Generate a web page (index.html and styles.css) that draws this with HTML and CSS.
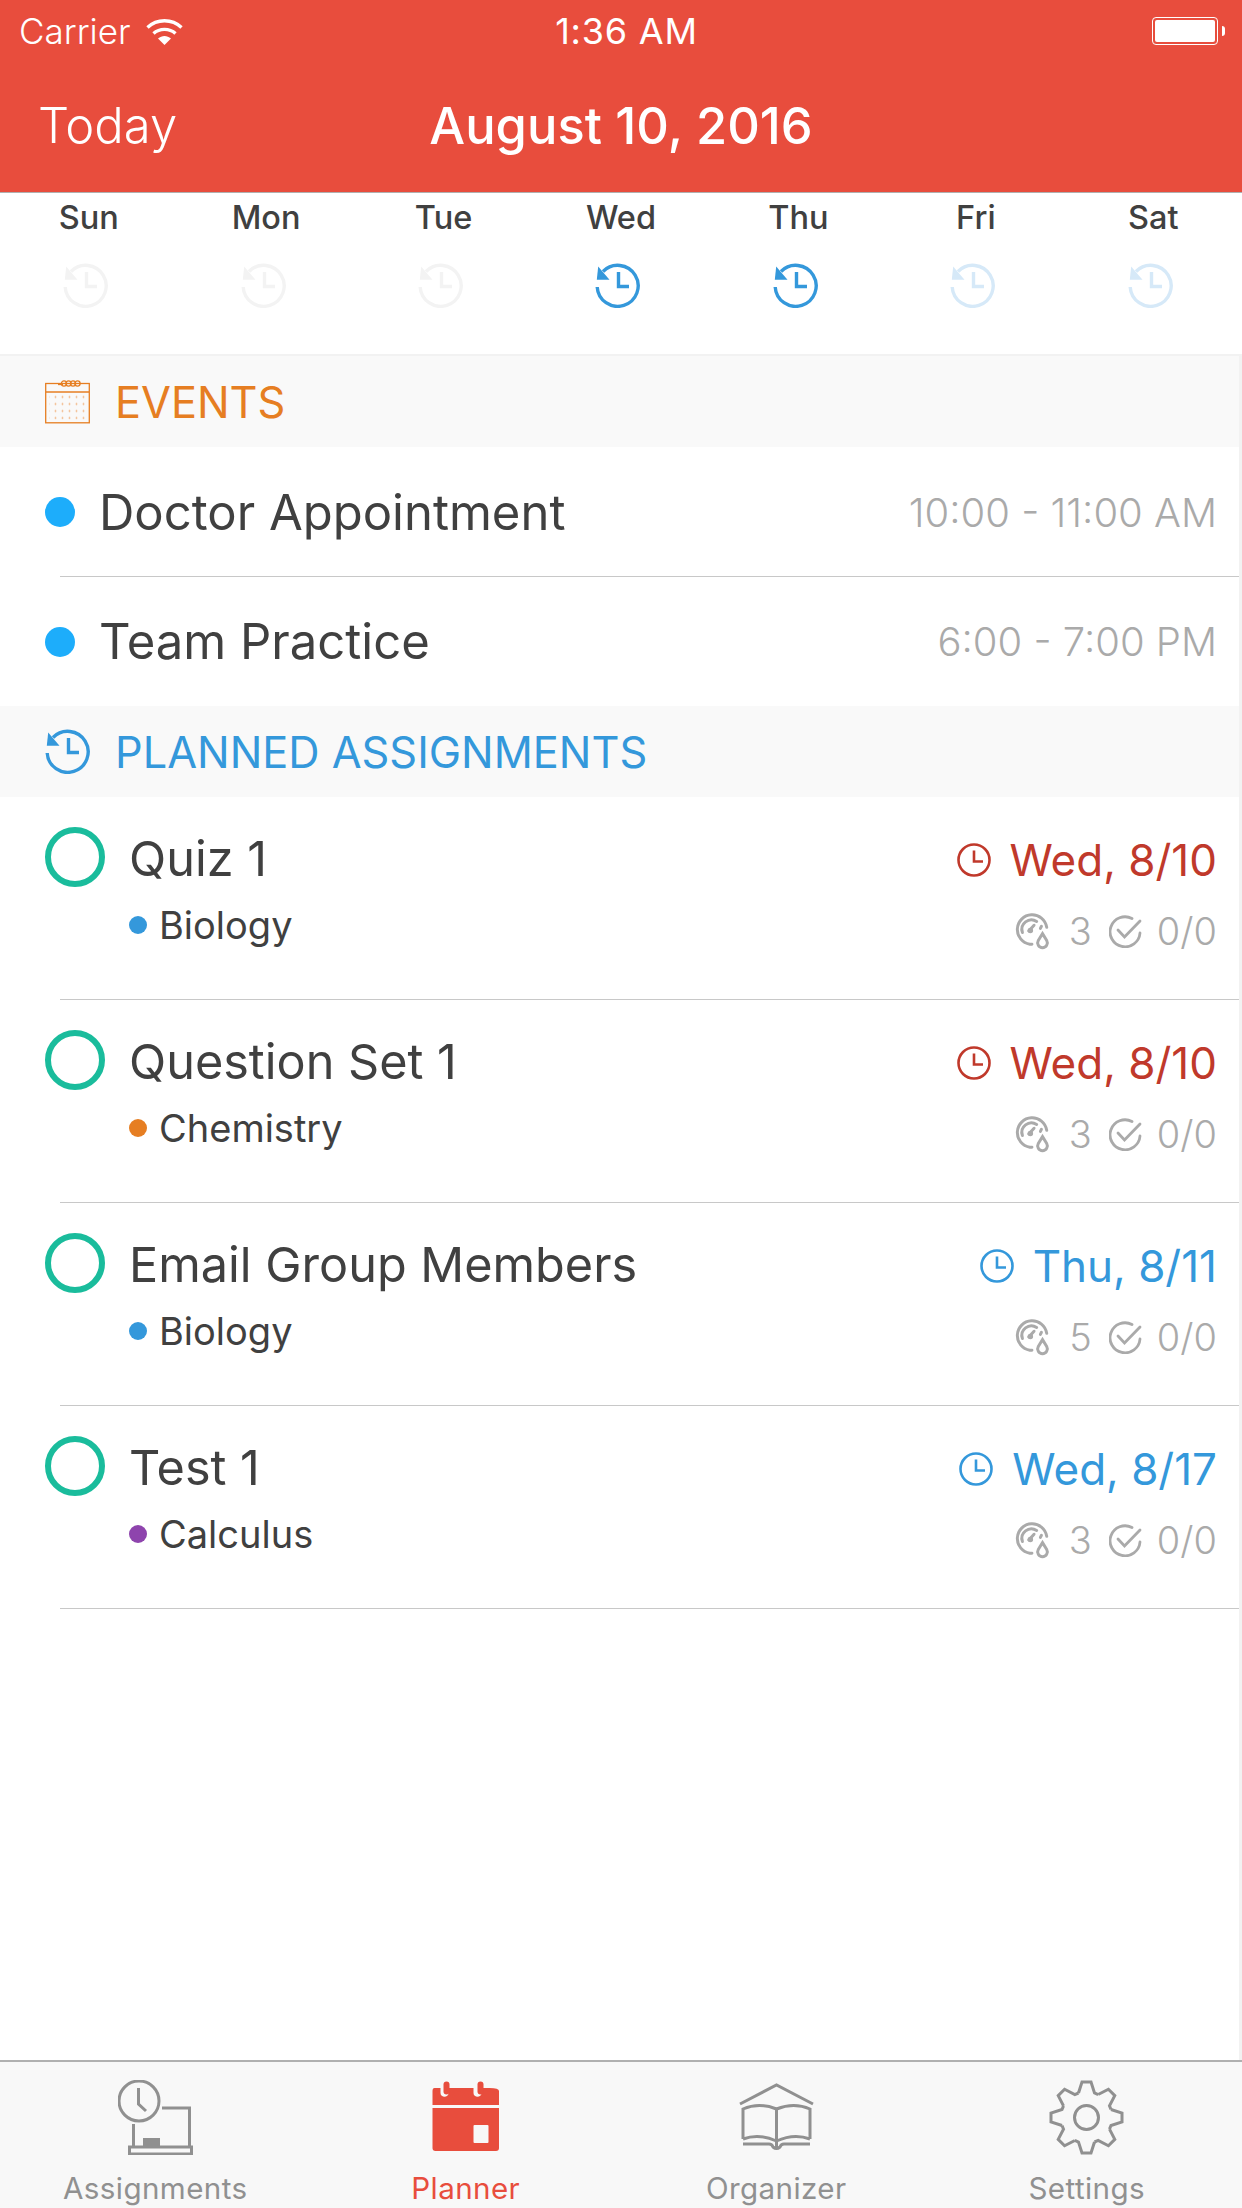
FILE: index.html
```html
<!DOCTYPE html>
<html lang="en">
<head>
    <meta charset="UTF-8">
    <title>Planner</title>
    <link rel="stylesheet" href="styles.css">
</head>
<body>
    <svg class="defs" width="0" height="0">
        <symbol id="history" viewBox="0 0 45 45">
            <path d="M2.2 24A20.5 20.5 0 1 0 8 8.5" fill="none" stroke="currentColor" stroke-width="3.4"/>
            <path d="M3.2 3.5 1.8 16.8H14.5L10 11.5Z" fill="currentColor"/>
            <path d="M23.5 9V23.5H34" fill="none" stroke="currentColor" stroke-width="3.4"/>
        </symbol>
        <symbol id="clock" viewBox="0 0 34 34">
            <circle cx="17" cy="17" r="15.5" fill="none" stroke="currentColor" stroke-width="2.6"/>
            <path d="M17 7.5V18.5H26" fill="none" stroke="currentColor" stroke-width="2.6"/>
        </symbol>
        <symbol id="gauge" viewBox="0 0 36 36">
            <g fill="none" stroke="#aaa" stroke-width="2.8" stroke-linecap="round">
                <path d="M17 30.5H15A14 14 0 1 1 31 14.5"/>
                <path d="M8 19.5A9 9 0 0 1 21.5 9"/>
                <path d="M26 13.5 25 15.5"/>
                <path d="M14 18 19 12.5"/>
                <path d="M27 20.5 31 27A4.6 4.6 0 1 1 23 27Z"/>
            </g>
            <circle cx="15.5" cy="17.5" r="2.6" fill="#aaa"/>
        </symbol>
        <symbol id="check" viewBox="0 0 33 33">
            <g fill="none" stroke="#aaa" stroke-width="2.8" stroke-linecap="round">
                <path d="M31 18A15 15 0 1 1 23 3.5"/>
                <path d="M9 15 15.5 22 31 6"/>
            </g>
        </symbol>
        <pattern id="dots" width="7" height="7" patternUnits="userSpaceOnUse">
            <circle cx="3.5" cy="3.5" r="0.9" fill="#f0b078"/>
        </pattern>
        <symbol id="calendar" viewBox="0 0 45 44">
            <rect x="0.7" y="4" width="43.6" height="39.3" fill="none" stroke="#e67e22" stroke-width="1.3"/>
            <path d="M1 12.5H44" stroke="#e67e22" stroke-width="1.3"/>
            <rect x="4" y="15" width="38" height="25" fill="url(#dots)"/>
            <g fill="none" stroke="#e67e22" stroke-width="1.3">
                <path d="M13 5H18"/>
                <circle cx="19" cy="4" r="2.6"/>
                <circle cx="23.5" cy="4" r="2.6"/>
                <circle cx="28" cy="4" r="2.6"/>
                <circle cx="32.5" cy="4" r="2.6"/>
            </g>
        </symbol>
    </svg>

    <header class="topbar">
        <div class="statusbar">
            <span class="carrier">Carrier</span>
            <svg class="wifi" viewBox="0 0 37 27">
                <path d="M1.5 9.5C11 .5 26 .5 35.5 9.5" fill="none" stroke="#fff" stroke-width="3.4"/>
                <path d="M7.5 15.5C13.5 10 23.5 10 29.5 15.5" fill="none" stroke="#fff" stroke-width="3.4"/>
                <path d="M12 20.5C16 17 21 17 25 20.5L18.5 27Z" fill="#fff"/>
            </svg>
            <span class="time">1:36 AM</span>
            <span class="battery"><span class="battery-fill"></span></span>
        </div>
        <div class="navbar">
            <span class="today">Today</span>
            <span class="date">August 10, 2016</span>
        </div>
    </header>

    <section class="week">
        <div class="day"><span>Sun</span><svg class="day-icon past"><use href="#history"/></svg></div>
        <div class="day"><span>Mon</span><svg class="day-icon past"><use href="#history"/></svg></div>
        <div class="day"><span>Tue</span><svg class="day-icon past"><use href="#history"/></svg></div>
        <div class="day"><span>Wed</span><svg class="day-icon active"><use href="#history"/></svg></div>
        <div class="day"><span>Thu</span><svg class="day-icon active"><use href="#history"/></svg></div>
        <div class="day"><span>Fri</span><svg class="day-icon future"><use href="#history"/></svg></div>
        <div class="day"><span>Sat</span><svg class="day-icon future"><use href="#history"/></svg></div>
    </section>

    <main class="content">
        <div class="section-head events-head">
            <svg class="section-icon"><use href="#calendar"/></svg>
            <span>EVENTS</span>
        </div>
        <div class="event">
            <span class="event-dot"></span>
            <span class="event-name">Doctor Appointment</span>
            <span class="event-time">10:00 - 11:00 AM</span>
        </div>
        <div class="event event-last">
            <span class="event-dot"></span>
            <span class="event-name">Team Practice</span>
            <span class="event-time">6:00 - 7:00 PM</span>
        </div>

        <div class="section-head planned-head">
            <svg class="section-icon"><use href="#history"/></svg>
            <span>PLANNED ASSIGNMENTS</span>
        </div>

        <div class="task">
            <span class="task-check"></span>
            <div class="task-main">
                <div class="task-title">Quiz 1</div>
                <div class="task-class"><span class="class-dot biology"></span>Biology</div>
            </div>
            <div class="task-side">
                <div class="task-due overdue"><svg class="due-icon"><use href="#clock"/></svg>Wed, 8/10</div>
                <div class="task-meta"><svg class="gauge-icon"><use href="#gauge"/></svg><span>3</span><svg class="check-icon"><use href="#check"/></svg><span>0/0</span></div>
            </div>
        </div>
        <div class="task">
            <span class="task-check"></span>
            <div class="task-main">
                <div class="task-title">Question Set 1</div>
                <div class="task-class"><span class="class-dot chemistry"></span>Chemistry</div>
            </div>
            <div class="task-side">
                <div class="task-due overdue"><svg class="due-icon"><use href="#clock"/></svg>Wed, 8/10</div>
                <div class="task-meta"><svg class="gauge-icon"><use href="#gauge"/></svg><span>3</span><svg class="check-icon"><use href="#check"/></svg><span>0/0</span></div>
            </div>
        </div>
        <div class="task">
            <span class="task-check"></span>
            <div class="task-main">
                <div class="task-title">Email Group Members</div>
                <div class="task-class"><span class="class-dot biology"></span>Biology</div>
            </div>
            <div class="task-side">
                <div class="task-due upcoming"><svg class="due-icon"><use href="#clock"/></svg>Thu, 8/11</div>
                <div class="task-meta"><svg class="gauge-icon"><use href="#gauge"/></svg><span>5</span><svg class="check-icon"><use href="#check"/></svg><span>0/0</span></div>
            </div>
        </div>
        <div class="task">
            <span class="task-check"></span>
            <div class="task-main">
                <div class="task-title">Test 1</div>
                <div class="task-class"><span class="class-dot calculus"></span>Calculus</div>
            </div>
            <div class="task-side">
                <div class="task-due upcoming"><svg class="due-icon"><use href="#clock"/></svg>Wed, 8/17</div>
                <div class="task-meta"><svg class="gauge-icon"><use href="#gauge"/></svg><span>3</span><svg class="check-icon"><use href="#check"/></svg><span>0/0</span></div>
            </div>
        </div>
    </main>

    <nav class="tabbar">
        <div class="tab">
            <svg class="tab-icon" viewBox="0 0 75 75">
                <g fill="none" stroke="#909090" stroke-width="3">
                    <circle cx="21" cy="21" r="20"/>
                    <path d="M20.5 8V24L28 31"/>
                    <path d="M44 28H71.5V66"/>
                    <path d="M15.5 44V66"/>
                    <rect x="11.5" y="67" width="62" height="7"/>
                </g>
                <rect x="25" y="58" width="17" height="9" fill="#909090"/>
            </svg>
            <span>Assignments</span>
        </div>
        <div class="tab tab-active">
            <svg class="tab-icon" viewBox="0 0 75 75">
                <path d="M9 8H17V13C17 18 25 18 25 13V8H50V13C50 18 58 18 58 13V8H66Q75.5 8 75.5 11V25H9V11Q9 8 11 8Z" fill="#e84d3d" transform="translate(-4.5 0)"/>
                <path d="M4.5 28H71V68Q71 71 68 71H7.5Q4.5 71 4.5 68Z" fill="#e84d3d"/>
                <rect x="15.5" y="1.5" width="6" height="13" rx="3" fill="#e84d3d"/>
                <rect x="49.5" y="1.5" width="6" height="13" rx="3" fill="#e84d3d"/>
                <rect x="45.5" y="45" width="15" height="18" rx="1" fill="#f8f8f8"/>
            </svg>
            <span>Planner</span>
        </div>
        <div class="tab">
            <svg class="tab-icon" viewBox="0 0 75 75">
                <g fill="none" stroke="#909090" stroke-width="3">
                    <path d="M1 24 37.5 5 74 24"/>
                    <path d="M4 59V29Q20 22 37.5 29Q55 22 71 29V59"/>
                    <path d="M37.5 29V68"/>
                    <path d="M4 59Q20 53 37.5 61Q55 53 71 59"/>
                    <path d="M4 64H30Q33 64 34 67Q37.5 70 41 67Q42 64 45 64H71"/>
                </g>
            </svg>
            <span>Organizer</span>
        </div>
        <div class="tab">
            <svg class="tab-icon" viewBox="0 0 75 75">
                <g fill="none" stroke="#909090" stroke-width="3">
                    <path id="tooth" d="M29.5 13 33 2H42L45.5 13 49.17 14.52"/>
                    <use href="#tooth" transform="rotate(45 37.5 37.5)"/>
                    <use href="#tooth" transform="rotate(90 37.5 37.5)"/>
                    <use href="#tooth" transform="rotate(135 37.5 37.5)"/>
                    <use href="#tooth" transform="rotate(180 37.5 37.5)"/>
                    <use href="#tooth" transform="rotate(225 37.5 37.5)"/>
                    <use href="#tooth" transform="rotate(270 37.5 37.5)"/>
                    <use href="#tooth" transform="rotate(315 37.5 37.5)"/>
                    <circle cx="37.5" cy="37.5" r="12"/>
                </g>
            </svg>
            <span>Settings</span>
        </div>
    </nav>
</body>
</html>
```

FILE: styles.css
```css
* { box-sizing: border-box; }
body { margin: 0; width: 1242px; height: 2208px; overflow: hidden; display: flex; flex-direction: column; background: #fff; font-family: Inter, "Noto Sans", sans-serif; color: #404040; }
svg { display: block; flex: none; }
.defs { position: absolute; }

.topbar { height: 193px; background: #e84d3d; border-bottom: 1px solid #b0b0b0; color: #fff; flex: none; }
.statusbar { height: 62px; padding: 0 24px 0 19px; display: flex; align-items: center; position: relative; font-size: 35px; }
.carrier { font-weight: 300; }
.wifi { width: 37px; height: 27px; margin-left: 15px; }
.time { position: absolute; left: 11px; right: 0; text-align: center; font-size: 36px; letter-spacing: 0.8px; }
.battery { margin-left: auto; width: 66px; height: 28px; border: 1px solid #fff; border-radius: 4px; padding: 2px; position: relative; }
.battery::after { content: ""; position: absolute; right: -8px; top: 8px; width: 3px; height: 10px; background: #fff; border-radius: 0 3px 3px 0; }
.battery-fill { display: block; height: 100%; background: #fff; border-radius: 2px; }
.navbar { height: 130px; display: flex; align-items: center; justify-content: center; position: relative; padding-bottom: 3px; }
.today { position: absolute; left: 38px; font-size: 49px; font-weight: 300; }
.date { font-size: 50.6px; font-weight: 500; }

.week { height: 161px; display: grid; grid-template-columns: repeat(7, 1fr); flex: none; }
.day { display: flex; flex-direction: column; align-items: center; padding-top: 2px; font-size: 32.5px; line-height: 46px; font-weight: 500; }
.day-icon { width: 45px; height: 45px; margin: 22px 6px 0 0; }
.past { color: #f3f3f3; }
.active { color: #3498db; }
.future { color: #d6e9f8; }

.content { flex: 1; border-right: 3px solid #f2f2f2; }
.section-head { height: 93px; padding-left: 45px; background: #f9f9f9; border-top: 2px solid #f2f2f2; display: flex; align-items: center; font-size: 43.3px; }
.section-icon { width: 45px; height: 45px; margin-right: 25px; }
.events-head { color: #e67e22; }
.planned-head { height: 91px; border-top: none; color: #3498db; }

.event { height: 130px; margin-left: 60px; border-bottom: 1px solid #c8c8c8; display: flex; align-items: center; padding: 1px 22px 0 0; }
.event-last { height: 129px; border-bottom: none; padding-top: 0; }
.event-dot { width: 30px; height: 30px; margin-left: -15px; border-radius: 50%; background: #1dadfb; }
.event-name { margin-left: 24px; font-size: 49px; }
.event-time { margin-left: auto; font-size: 40px; color: #aaa; font-weight: 300; }

.task { height: 203px; margin-left: 60px; border-bottom: 1px solid #c8c8c8; display: flex; padding: 30px 22px 0 0; }
.task-check { width: 60px; height: 60px; margin-left: -15px; border: 6px solid #1abc9c; border-radius: 50%; flex: none; }
.task-main { margin-left: 24px; }
.task-title { font-size: 48.6px; line-height: 63px; }
.task-class { display: flex; align-items: center; margin-top: 12px; font-size: 38px; line-height: 46px; }
.class-dot { width: 18px; height: 18px; border-radius: 50%; margin-right: 12px; }
.biology { background: #3498db; }
.chemistry { background: #e67e22; }
.calculus { background: #8e44ad; }
.task-side { margin-left: auto; display: flex; flex-direction: column; align-items: flex-end; }
.task-due { display: flex; align-items: center; font-size: 44px; line-height: 66px; }
.due-icon { width: 34px; height: 34px; margin-right: 19px; }
.overdue { color: #c0392b; }
.upcoming { color: #3498db; }
.task-meta { display: flex; align-items: center; margin-top: 15px; font-size: 38px; line-height: 46px; color: #aaa; font-weight: 300; }
.gauge-icon { width: 38px; height: 38px; margin-right: 17px; }
.check-icon { width: 33px; height: 33px; margin: 0 15px 0 17px; }

.tabbar { height: 148px; flex: none; background: #f8f8f8; border-top: 2px solid #b0b0b0; display: grid; grid-template-columns: repeat(4, 1fr); font-size: 29.6px; color: #909090; }
.tab { display: flex; flex-direction: column; align-items: center; padding-top: 18px; }
.tab span { margin-top: 13px; line-height: 40px; letter-spacing: 0.4px; }
.tab-icon { width: 75px; height: 75px; }
.tab-active { color: #e84d3d; }
```
